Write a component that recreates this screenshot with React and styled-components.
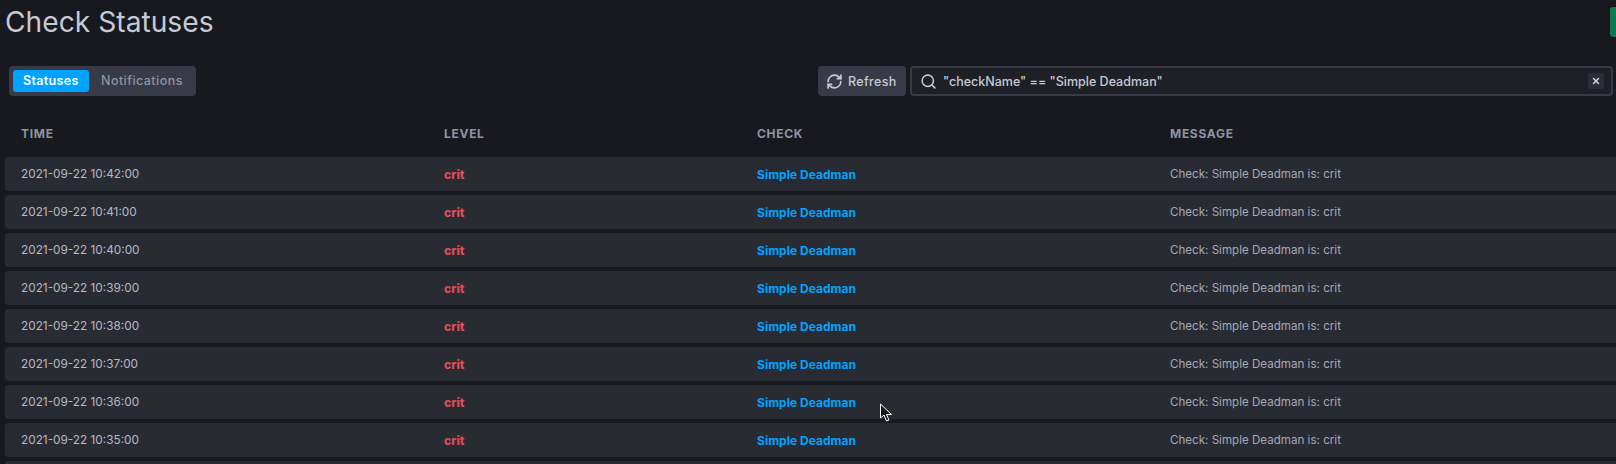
import React from 'react';
import styled, { createGlobalStyle } from 'styled-components';
import { RefreshCw, Search, X } from 'lucide-react';

const Global = createGlobalStyle`
  html, body { margin: 0; padding: 0; background: #18191e; overflow: hidden; }
  body { font-family: Inter, "Liberation Sans", sans-serif; }
`;
const Page = styled.div`
  position: relative; width: 1616px; height: 464px; overflow: hidden; background: #18191e;
  padding-left: 5px; padding-top: 7px; box-sizing: border-box;
`;
const TitleBar = styled.div`
  display: flex; justify-content: space-between; height: 30px; align-items: flex-start;
`;
const Title = styled.h1`
  margin: -1px 0 0 0; font-size: 28.2px; line-height: 32px; font-weight: 400; color: #c4cad6; letter-spacing: 0;
`;
const GreenTab = styled.div`
  width: 6px; height: 30px; background: #0f7a52; border-radius: 3px 0 0 3px;
`;
const Toolbar = styled.div`
  display: flex; align-items: center; justify-content: space-between;
  margin: 29px 3px 0 4px; height: 30px;
`;
const Tabs = styled.div`
  display: flex; background: #383a47; border-radius: 4px; padding: 4px; width: 187px; box-sizing: border-box;
`;
const Tab = styled.div`
  flex: none; height: 22px; line-height: 22px; font-size: 12.5px; font-weight: ${p => (p.$active ? 600 : 500)};
  padding: ${p => (p.$active ? '0 0 0 10px' : '0 0 0 12px')}; border-radius: 3px;
  letter-spacing: ${p => (p.$active ? '.35px' : '.45px')}; white-space: nowrap;
  color: ${p => (p.$active ? '#fff' : '#8e93a3')};
  background: ${p => (p.$active ? '#00a3ff' : 'transparent')};
  width: ${p => (p.$active ? '76px' : 'auto')}; box-sizing: border-box;
`;
const Actions = styled.div`display: flex; gap: 4px; align-items: center;`;
const RefreshButton = styled.div`
  display: flex; align-items: center; gap: 5px; width: 88px; height: 30px; box-sizing: border-box;
  padding-left: 8px; background: #383a47; border-radius: 4px; color: #c4cad6; font-size: 12.5px; font-weight: 500; letter-spacing: .35px;
`;
const SearchBox = styled.div`
  display: flex; align-items: center; width: 703px; height: 30px; box-sizing: border-box;
  border: 2px solid #383a47; border-radius: 4px; background: #1f2026; padding: 0 7px 0 8px;
`;
const SearchText = styled.span`
  flex: 1; margin-left: 6px; font-size: 12.5px; font-weight: 500; color: #c4cad6;
`;
const ClearButton = styled.div`
  display: flex; align-items: center; justify-content: center; width: 16px; height: 16px;
  background: #2c2e38; border-radius: 2px; color: #d5d9e2;
`;
const HeadRow = styled.div`
  display: grid; grid-template-columns: 423px 313px 413px 1fr; padding-left: 16px; margin-top: 27px; height: 20px; align-items: center;
`;
const HeadCell = styled.div`
  font-size: 12px; font-weight: 700; color: #8e93a3; letter-spacing: .7px;
`;
const Rows = styled.div`display: flex; flex-direction: column; gap: 4px; margin-top: 14px;`;
const Row = styled.div`
  display: grid; grid-template-columns: 423px 313px 413px 1fr; align-items: center; flex: none;
  height: 34px; padding-left: 16px; background: #292b33; border-radius: 3px 0 0 3px; font-size: 11.8px;
`;
const TimeCell = styled.div`color: #b4b9c6;`;
const Level = styled.div`color: #dc4e58; font-weight: 800; font-size: 12.2px;`;
const CheckLink = styled.div`color: #00a3ff; font-weight: 700; font-size: 12px; letter-spacing: .02px;`;
const Message = styled.div`color: #a4a8b6; font-size: 11.6px;`;
const Cursor = styled.svg`position: absolute; left: 879px; top: 403px;`;

const times = ['10:42:00','10:41:00','10:40:00','10:39:00','10:38:00','10:37:00','10:36:00','10:35:00'];

export default function App() {
  return (
    <Page>
      <Global />
      <TitleBar>
        <Title>Check Statuses</Title>
        <GreenTab />
      </TitleBar>
      <Toolbar>
        <Tabs>
          <Tab $active>Statuses</Tab>
          <Tab>Notifications</Tab>
        </Tabs>
        <Actions>
          <RefreshButton><RefreshCw size={17} strokeWidth={2.4} />Refresh</RefreshButton>
          <SearchBox>
            <Search size={17} strokeWidth={2.2} color="#c4cad6" />
            <SearchText>"checkName" == "Simple Deadman"</SearchText>
            <ClearButton><X size={10} strokeWidth={3.5} /></ClearButton>
          </SearchBox>
        </Actions>
      </Toolbar>
      <HeadRow>
        <HeadCell>TIME</HeadCell>
        <HeadCell>LEVEL</HeadCell>
        <HeadCell>CHECK</HeadCell>
        <HeadCell>MESSAGE</HeadCell>
      </HeadRow>
      <Rows>
        {times.map(t => (
          <Row key={t}>
            <TimeCell>2021-09-22 {t}</TimeCell>
            <Level>crit</Level>
            <CheckLink>Simple Deadman</CheckLink>
            <Message>Check: Simple Deadman is: crit</Message>
          </Row>
        ))}
        <Row />
      </Rows>
      <Cursor width="14" height="20" viewBox="0 0 14 20">
        <path d="M1.5 1 L1.5 15 L5 12 L7.5 18 L10 17 L7.5 11.5 L12.5 11.5 Z" fill="#18191e" stroke="#fff" strokeWidth="1" />
      </Cursor>
    </Page>
  );
}
